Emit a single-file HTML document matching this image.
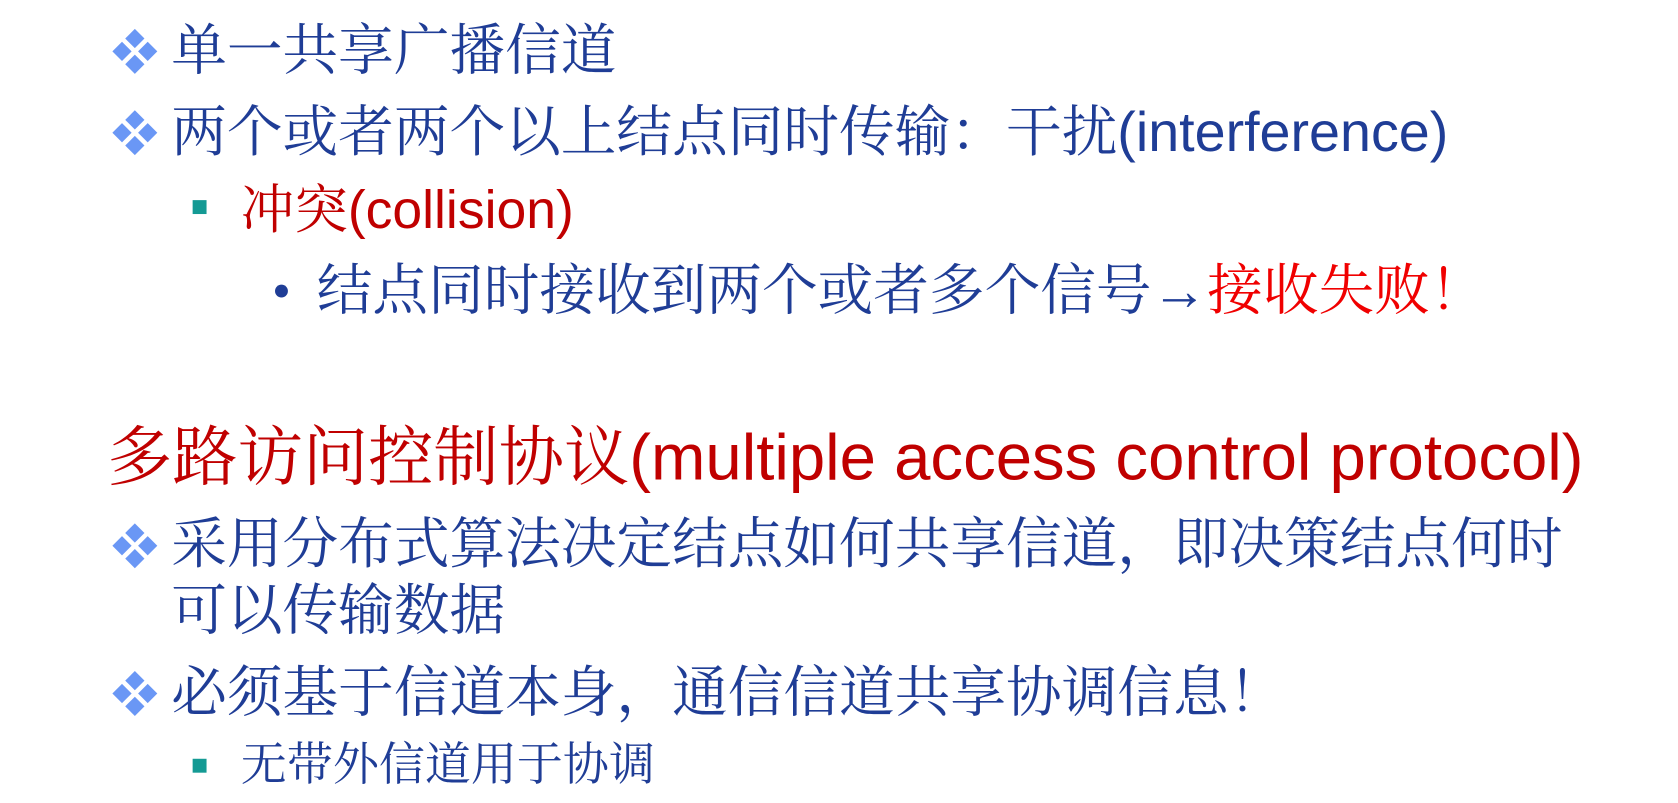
<!DOCTYPE html>
<html><head><meta charset="utf-8"><style>
body{margin:0;width:1678px;height:802px;background:#fff;overflow:hidden;position:relative;font-family:"Liberation Sans","Noto Serif CJK SC",serif;}
#w{position:absolute;left:0;top:0;width:1568px;height:750px;transform:scale(1.0702);transform-origin:0 0;}
.l{position:absolute;white-space:nowrap;line-height:1;}
.b{color:#1f3d96;}
.r{color:#c00000;}
.rr{color:#f00000;}
.lat{font-family:"Liberation Sans",sans-serif;}
.dia{position:absolute;width:44px;height:44px;}
.sq{position:absolute;width:13px;height:13px;background:#149a94;}
.dot{position:absolute;width:12px;height:12px;border-radius:50%;background:#1f3d96;}
</style></head><body><div id="w">
<svg class="dia" style="left:104px;top:26px" viewBox="0 0 44 44"><g fill="#6a97f5"><path d="M22 1l9 9-9 9-9-9z"/><path d="M22 25l9 9-9 9-9-9z"/><path d="M10 13l9 9-9 9-9-9z"/><path d="M34 13l9 9-9 9-9-9z"/></g></svg>
<div class="l b" style="left:160px;top:22px;font-size:52px;">单一共享广播信道</div>
<svg class="dia" style="left:104px;top:102px" viewBox="0 0 44 44"><g fill="#6a97f5"><path d="M22 1l9 9-9 9-9-9z"/><path d="M22 25l9 9-9 9-9-9z"/><path d="M10 13l9 9-9 9-9-9z"/><path d="M34 13l9 9-9 9-9-9z"/></g></svg>
<div class="l b" style="left:160px;top:98px;font-size:52px;">两个或者两个以上结点同时传输：干扰<span class="lat">(interference)</span></div>
<div class="sq" style="left:180px;top:187px"></div>
<div class="l r" style="left:225px;top:171px;font-size:50px;">冲突<span class="lat">(collision)</span></div>
<div class="dot" style="left:257px;top:266px"></div>
<div class="l b" style="left:296px;top:246px;font-size:52px;">结点同时接收到两个或者多个信号→<span class="rr">接收失败！</span></div>
<div class="l r" style="left:100px;top:397px;font-size:61px;">多路访问控制协议<span class="lat">(multiple access control protocol)</span></div>
<svg class="dia" style="left:104px;top:488px" viewBox="0 0 44 44"><g fill="#6a97f5"><path d="M22 1l9 9-9 9-9-9z"/><path d="M22 25l9 9-9 9-9-9z"/><path d="M10 13l9 9-9 9-9-9z"/><path d="M34 13l9 9-9 9-9-9z"/></g></svg>
<div class="l b" style="left:160px;top:483px;font-size:52px;">采用分布式算法决定结点如何共享信道，即决策结点何时</div>
<div class="l b" style="left:160px;top:545px;font-size:52px;">可以传输数据</div>
<svg class="dia" style="left:104px;top:626px" viewBox="0 0 44 44"><g fill="#6a97f5"><path d="M22 1l9 9-9 9-9-9z"/><path d="M22 25l9 9-9 9-9-9z"/><path d="M10 13l9 9-9 9-9-9z"/><path d="M34 13l9 9-9 9-9-9z"/></g></svg>
<div class="l b" style="left:160px;top:622px;font-size:52px;">必须基于信道本身，通信信道共享协调信息！</div>
<div class="sq" style="left:180px;top:709px"></div>
<div class="l b" style="left:225px;top:694px;font-size:43px;">无带外信道用于协调</div>
</div></body></html>
